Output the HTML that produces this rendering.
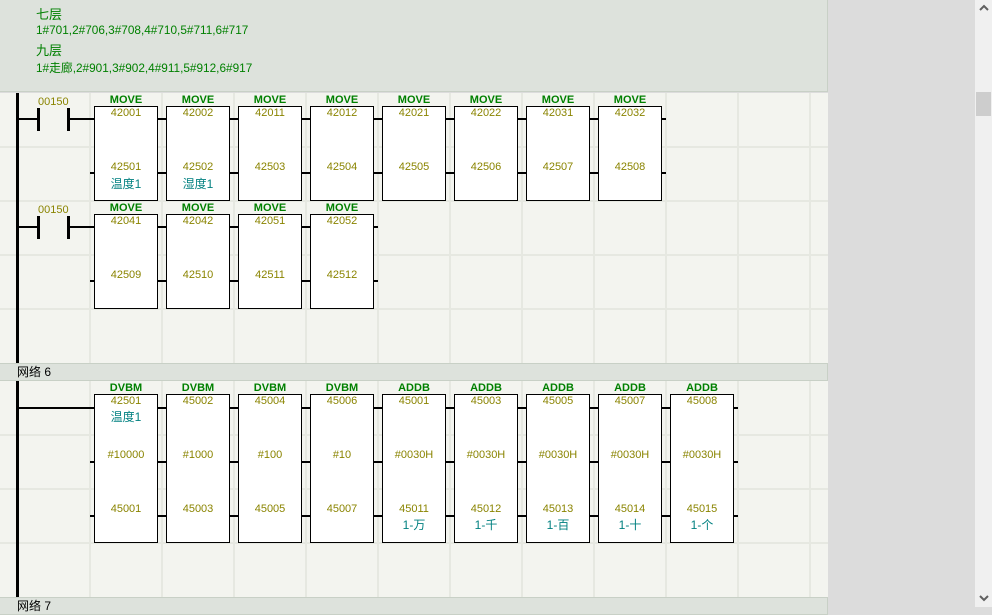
<!DOCTYPE html><html><head><meta charset="utf-8"><style>
body{margin:0;width:992px;height:607px;overflow:hidden;background:#dcdcdc;font-family:"Liberation Sans","Noto Sans CJK SC",sans-serif;position:relative}
.a{position:absolute}
.hd{left:0;top:0;width:827px;height:91px;background:#dde2dc;border-right:1px solid #c8d0c6;border-bottom:1px solid #c8d0c6}
.hd div{position:absolute;left:36px;color:#008000}
.area{background:#f3f4ef;left:0;width:828px}
.vl{width:2px;background:#e6e8e1}
.hl{height:2px;background:#e6e8e1;left:0;width:828px}
.bar{left:0;width:827px;height:16px;background:#dde2dc;border:1px solid #c8d0c6;border-left:none;font-size:12px;line-height:16px;color:#000}
.w{background:#000;height:2px}
.rail{background:#000;width:3px;left:16px}
.bx{width:62px;background:#fff;border:1px solid #000}
.t{font-size:11px;color:#8a8400;text-align:center;width:64px}
.op{font-size:11px;font-weight:bold;color:#008000;text-align:center;width:64px}
.c{font-size:12px;color:#008080;text-align:center;width:64px}
.ct{width:3px;height:23px;background:#000}
.nm{font-size:11px;color:#8a8400}
</style></head><body>
<div class="a hd"><div style="top:4px;font-size:13px">七层</div><div style="top:23px;font-size:11.8px">1#701,2#706,3#708,4#710,5#711,6#717</div><div style="top:40px;font-size:13px">九层</div><div style="top:59px;font-size:11.8px">1#走廊,2#901,3#902,4#911,5#912,6#917</div></div>
<div class="a area" style="top:93px;height:270px"></div>
<div class="a area" style="top:381px;height:216px"></div>
<div class="a vl" style="left:89px;top:93px;height:270px"></div><div class="a vl" style="left:161px;top:93px;height:270px"></div><div class="a vl" style="left:233px;top:93px;height:270px"></div><div class="a vl" style="left:305px;top:93px;height:270px"></div><div class="a vl" style="left:377px;top:93px;height:270px"></div><div class="a vl" style="left:449px;top:93px;height:270px"></div><div class="a vl" style="left:521px;top:93px;height:270px"></div><div class="a vl" style="left:593px;top:93px;height:270px"></div><div class="a vl" style="left:665px;top:93px;height:270px"></div><div class="a vl" style="left:737px;top:93px;height:270px"></div><div class="a vl" style="left:809px;top:93px;height:270px"></div>
<div class="a vl" style="left:89px;top:381px;height:216px"></div><div class="a vl" style="left:161px;top:381px;height:216px"></div><div class="a vl" style="left:233px;top:381px;height:216px"></div><div class="a vl" style="left:305px;top:381px;height:216px"></div><div class="a vl" style="left:377px;top:381px;height:216px"></div><div class="a vl" style="left:449px;top:381px;height:216px"></div><div class="a vl" style="left:521px;top:381px;height:216px"></div><div class="a vl" style="left:593px;top:381px;height:216px"></div><div class="a vl" style="left:665px;top:381px;height:216px"></div><div class="a vl" style="left:737px;top:381px;height:216px"></div><div class="a vl" style="left:809px;top:381px;height:216px"></div>
<div class="a hl" style="top:146px"></div><div class="a hl" style="top:200px"></div><div class="a hl" style="top:254px"></div><div class="a hl" style="top:308px"></div>
<div class="a hl" style="top:434px"></div><div class="a hl" style="top:488px"></div><div class="a hl" style="top:542px"></div>
<div class="a bar" style="top:363px"><span style="margin-left:17px">网络 6</span></div>
<div class="a bar" style="top:597px"><span style="margin-left:17px">网络 7</span></div>
<div class="a rail" style="top:93px;height:270px"></div>
<div class="a rail" style="top:381px;height:216px"></div>
<div class="a w" style="left:17px;top:118px;width:21px"></div><div class="a w" style="left:68px;top:118px;width:598px"></div>
<div class="a w" style="left:90px;top:172px;width:576px"></div>
<div class="a ct" style="left:37px;top:108px"></div><div class="a ct" style="left:67px;top:108px"></div>
<div class="a nm" style="left:38px;top:96px">00150</div>
<div class="a w" style="left:17px;top:226px;width:21px"></div><div class="a w" style="left:68px;top:226px;width:310px"></div>
<div class="a w" style="left:90px;top:280px;width:288px"></div>
<div class="a ct" style="left:37px;top:216px"></div><div class="a ct" style="left:67px;top:216px"></div>
<div class="a nm" style="left:38px;top:204px">00150</div>
<div class="a w" style="left:17px;top:407px;width:721px"></div>
<div class="a w" style="left:90px;top:461px;width:648px"></div>
<div class="a w" style="left:90px;top:515px;width:648px"></div>

<div class="a bx" style="left:94px;top:106px;height:93px"></div><div class="a op" style="left:94px;top:94px">MOVE</div><div class="a t" style="left:94px;top:107px">42001</div><div class="a t" style="left:94px;top:161px">42501</div><div class="a c" style="left:94px;top:175px">温度1</div>
<div class="a bx" style="left:166px;top:106px;height:93px"></div><div class="a op" style="left:166px;top:94px">MOVE</div><div class="a t" style="left:166px;top:107px">42002</div><div class="a t" style="left:166px;top:161px">42502</div><div class="a c" style="left:166px;top:175px">湿度1</div>
<div class="a bx" style="left:238px;top:106px;height:93px"></div><div class="a op" style="left:238px;top:94px">MOVE</div><div class="a t" style="left:238px;top:107px">42011</div><div class="a t" style="left:238px;top:161px">42503</div>
<div class="a bx" style="left:310px;top:106px;height:93px"></div><div class="a op" style="left:310px;top:94px">MOVE</div><div class="a t" style="left:310px;top:107px">42012</div><div class="a t" style="left:310px;top:161px">42504</div>
<div class="a bx" style="left:382px;top:106px;height:93px"></div><div class="a op" style="left:382px;top:94px">MOVE</div><div class="a t" style="left:382px;top:107px">42021</div><div class="a t" style="left:382px;top:161px">42505</div>
<div class="a bx" style="left:454px;top:106px;height:93px"></div><div class="a op" style="left:454px;top:94px">MOVE</div><div class="a t" style="left:454px;top:107px">42022</div><div class="a t" style="left:454px;top:161px">42506</div>
<div class="a bx" style="left:526px;top:106px;height:93px"></div><div class="a op" style="left:526px;top:94px">MOVE</div><div class="a t" style="left:526px;top:107px">42031</div><div class="a t" style="left:526px;top:161px">42507</div>
<div class="a bx" style="left:598px;top:106px;height:93px"></div><div class="a op" style="left:598px;top:94px">MOVE</div><div class="a t" style="left:598px;top:107px">42032</div><div class="a t" style="left:598px;top:161px">42508</div>
<div class="a bx" style="left:94px;top:214px;height:93px"></div><div class="a op" style="left:94px;top:202px">MOVE</div><div class="a t" style="left:94px;top:215px">42041</div><div class="a t" style="left:94px;top:269px">42509</div>
<div class="a bx" style="left:166px;top:214px;height:93px"></div><div class="a op" style="left:166px;top:202px">MOVE</div><div class="a t" style="left:166px;top:215px">42042</div><div class="a t" style="left:166px;top:269px">42510</div>
<div class="a bx" style="left:238px;top:214px;height:93px"></div><div class="a op" style="left:238px;top:202px">MOVE</div><div class="a t" style="left:238px;top:215px">42051</div><div class="a t" style="left:238px;top:269px">42511</div>
<div class="a bx" style="left:310px;top:214px;height:93px"></div><div class="a op" style="left:310px;top:202px">MOVE</div><div class="a t" style="left:310px;top:215px">42052</div><div class="a t" style="left:310px;top:269px">42512</div>
<div class="a bx" style="left:94px;top:394px;height:147px"></div><div class="a op" style="left:94px;top:382px">DVBM</div><div class="a t" style="left:94px;top:395px">42501</div><div class="a c" style="left:94px;top:408px">温度1</div><div class="a t" style="left:94px;top:449px">#10000</div><div class="a t" style="left:94px;top:503px">45001</div>
<div class="a bx" style="left:166px;top:394px;height:147px"></div><div class="a op" style="left:166px;top:382px">DVBM</div><div class="a t" style="left:166px;top:395px">45002</div><div class="a t" style="left:166px;top:449px">#1000</div><div class="a t" style="left:166px;top:503px">45003</div>
<div class="a bx" style="left:238px;top:394px;height:147px"></div><div class="a op" style="left:238px;top:382px">DVBM</div><div class="a t" style="left:238px;top:395px">45004</div><div class="a t" style="left:238px;top:449px">#100</div><div class="a t" style="left:238px;top:503px">45005</div>
<div class="a bx" style="left:310px;top:394px;height:147px"></div><div class="a op" style="left:310px;top:382px">DVBM</div><div class="a t" style="left:310px;top:395px">45006</div><div class="a t" style="left:310px;top:449px">#10</div><div class="a t" style="left:310px;top:503px">45007</div>
<div class="a bx" style="left:382px;top:394px;height:147px"></div><div class="a op" style="left:382px;top:382px">ADDB</div><div class="a t" style="left:382px;top:395px">45001</div><div class="a t" style="left:382px;top:449px">#0030H</div><div class="a t" style="left:382px;top:503px">45011</div><div class="a c" style="left:382px;top:516px">1-万</div>
<div class="a bx" style="left:454px;top:394px;height:147px"></div><div class="a op" style="left:454px;top:382px">ADDB</div><div class="a t" style="left:454px;top:395px">45003</div><div class="a t" style="left:454px;top:449px">#0030H</div><div class="a t" style="left:454px;top:503px">45012</div><div class="a c" style="left:454px;top:516px">1-千</div>
<div class="a bx" style="left:526px;top:394px;height:147px"></div><div class="a op" style="left:526px;top:382px">ADDB</div><div class="a t" style="left:526px;top:395px">45005</div><div class="a t" style="left:526px;top:449px">#0030H</div><div class="a t" style="left:526px;top:503px">45013</div><div class="a c" style="left:526px;top:516px">1-百</div>
<div class="a bx" style="left:598px;top:394px;height:147px"></div><div class="a op" style="left:598px;top:382px">ADDB</div><div class="a t" style="left:598px;top:395px">45007</div><div class="a t" style="left:598px;top:449px">#0030H</div><div class="a t" style="left:598px;top:503px">45014</div><div class="a c" style="left:598px;top:516px">1-十</div>
<div class="a bx" style="left:670px;top:394px;height:147px"></div><div class="a op" style="left:670px;top:382px">ADDB</div><div class="a t" style="left:670px;top:395px">45008</div><div class="a t" style="left:670px;top:449px">#0030H</div><div class="a t" style="left:670px;top:503px">45015</div><div class="a c" style="left:670px;top:516px">1-个</div>
<div class="a" style="left:975px;top:0;width:17px;height:607px;background:#f0f0f0"></div>
<div class="a" style="left:976px;top:92px;width:15px;height:24px;background:#cdcdcd"></div>
<svg class="a" style="left:978px;top:3px" width="12" height="10"><path d="M2 7 L6 3 L10 7" stroke="#606060" stroke-width="2" fill="none"/></svg>
<svg class="a" style="left:978px;top:593px" width="12" height="10"><path d="M2 3 L6 7 L10 3" stroke="#606060" stroke-width="2" fill="none"/></svg>
</body></html>
